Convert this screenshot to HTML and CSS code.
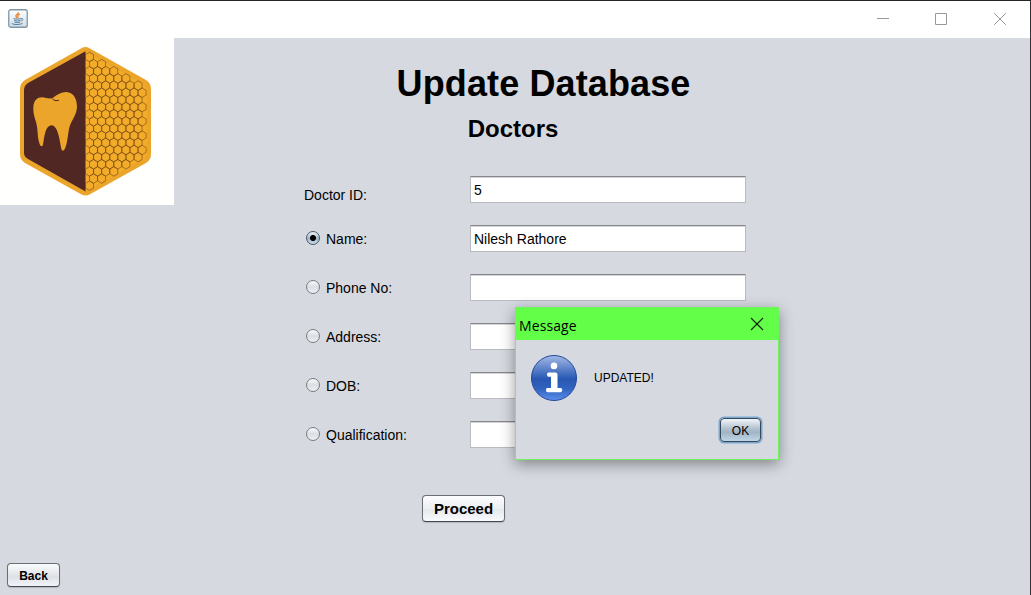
FILE: index.html
```html
<!DOCTYPE html>
<html lang="en">
<head>
<meta charset="utf-8">
<title>Update Database</title>
<link rel="stylesheet" href="styles.css">
</head>
<body>
<div class="window">
  <header class="titlebar">
    <svg class="java" width="20" height="19" viewBox="0 0 20 19">
      <defs><linearGradient id="jb" x1="0" y1="0" x2="0" y2="1"><stop offset="0" stop-color="#fff"/><stop offset="1" stop-color="#cfdce6"/></linearGradient></defs>
      <rect x=".75" y=".75" width="18.5" height="17.5" rx="2" fill="url(#jb)" stroke="#7f97a8" stroke-width="1.3"/>
      <path d="M10.3 3.200c.6 1.800-3.300 2.500-2.300 4.300l1.200 1.500M12 5.200c-3 1-2.400 2-1.700 3.600" fill="none" stroke="#ea8a3e" stroke-width="1.4"/>
      <path d="M5.500 9.700q3.500.9 7.500 0M6 11.500q3.500 1 6.500 0M6.500 13.200q3 .8 5.500 0M13 9.700c2.500-.8 2.500 1.800-.2 2.500M3.800 14.500c2 1.500 8.500 1.300 10.700-.1" fill="none" stroke="#56809f" stroke-width="1"/>
    </svg>
    <div class="controls">
      <svg width="12" height="12" viewBox="0 0 12 12"><path d="M0 5.500H12"/></svg>
      <svg width="12" height="12" viewBox="0 0 12 12"><path d="M.5.5h11v11H.5z"/></svg>
      <svg width="12" height="12" viewBox="0 0 12 12"><path d="M.2.2l11.600 11.600M11.800.2L.2 11.800"/></svg>
    </div>
  </header>
  <main class="content">
    <aside class="side">
      <svg class="logo" width="174" height="167" viewBox="0 38 174 167">
        <defs>
          <path id="c" d="M0-4.770L4-2.380V2.380L0 4.770-4 2.380V-2.380Z"/>
          <g id="r2"><use href="#c"/><use href="#c" x="8.100"/></g>
          <g id="r4"><use href="#r2"/><use href="#r2" x="16.200"/></g>
          <g id="r5"><use href="#r4"/><use href="#c" x="32.400"/></g>
          <g id="r7"><use href="#r5"/><use href="#r2" x="40.500"/></g>
        </defs>
        <path d="M81.500 48.200Q85.500 46 89.500 48.200L146 80Q151 83 151 89V154Q151 160 146 163L89.500 194.500Q85.500 196.700 81.500 194.500L25 163Q20 160 20 154V89Q20 83 25 80Z" fill="#eba52b"/>
        <path d="M85.500 51.500L142 83.500Q147 86 147 91V152Q147 157 142 160L85.500 191.500Z" fill="#f2ac29"/>
        <path d="M85.500 51.300L28 83Q24 85.500 24 90V153Q24 156.500 28 159L85.500 191.500Z" fill="#512724"/>
        <path d="M33.300 108C33.500 100 37.500 97.200 42 97.200C46 97.300 49 99.500 53 97.800C57 94.500 61.500 91.800 66.500 91.900C73 92.300 77 98 77 107C76.500 116 71 120 69 129C67.500 138 67 145 64.500 149.500C63.300 151.300 61.800 151 61.300 148.500C59.500 138 57.500 125.300 51.300 125.300C45 125.800 44.500 137 43 144.500C42.500 146.700 40.800 146.700 39.800 144.500C37 137 38.300 130 36 122C34.500 117 33.100 113 33.300 108Z" fill="#eba52b"/>
        <path d="M52 98.300C53.500 100.600 56 101 59 100.300" fill="none" stroke="#512724"/>
        <g fill="none" stroke="#74450f" stroke-width=".6">
          <use href="#c" x="89.500" y="57"/>
          <use href="#r2" x="93.500" y="64.150"/>
          <use href="#r4" x="89.500" y="71.300"/>
          <use href="#r5" x="93.500" y="78.450"/>
          <use href="#r7" x="89.500" y="85.600"/>
          <use href="#r7" x="93.500" y="92.750"/>
          <use href="#r7" x="89.500" y="99.900"/>
          <use href="#r7" x="93.500" y="107.050"/>
          <use href="#r7" x="89.500" y="114.200"/>
          <use href="#r7" x="93.500" y="121.350"/>
          <use href="#r7" x="89.500" y="128.500"/>
          <use href="#r7" x="93.500" y="135.650"/>
          <use href="#r7" x="89.500" y="142.800"/>
          <use href="#r7" x="93.500" y="149.950"/>
          <use href="#r7" x="89.500" y="157.100"/>
          <use href="#r5" x="93.500" y="164.250"/>
          <use href="#r4" x="89.500" y="171.400"/>
          <use href="#r2" x="93.500" y="178.550"/>
          <use href="#c" x="89.500" y="185.700"/>
        </g>
      </svg>
      <button class="btn back">Back</button>
    </aside>
    <section class="panel">
      <div class="headings">
        <h1>Update Database</h1>
        <h2>Doctors</h2>
      </div>
      <div class="form">
        <div class="row id"><span class="label">Doctor ID:</span><div class="field">5</div></div>
        <div class="row"><i class="radio on"></i><span class="label">Name:</span><div class="field">Nilesh Rathore</div></div>
        <div class="row"><i class="radio"></i><span class="label">Phone No:</span><div class="field"></div></div>
        <div class="row"><i class="radio"></i><span class="label">Address:</span><div class="field"></div></div>
        <div class="row"><i class="radio"></i><span class="label">DOB:</span><div class="field"></div></div>
        <div class="row"><i class="radio"></i><span class="label">Qualification:</span><div class="field"></div></div>
      </div>
      <button class="btn proceed">Proceed</button>
    </section>
  </main>
  <div class="dialog">
    <div class="dialog-title"><span>Message</span>
      <svg width="14" height="14" viewBox="0 0 14 14"><path d="M1 1l12 12M13 1L1 13" stroke="#102010" stroke-width="1.100"/></svg>
    </div>
    <div class="dialog-body">
      <div class="message">
        <svg width="46" height="46" viewBox="0 0 46 46">
          <defs><linearGradient id="ig" x1="0" y1="0" x2="0" y2="1"><stop offset="0" stop-color="#a3b9e5"/><stop offset=".48" stop-color="#315fb8"/><stop offset=".52" stop-color="#2857b1"/><stop offset=".75" stop-color="#3264c2"/><stop offset="1" stop-color="#5d91ed"/></linearGradient></defs>
          <circle cx="23" cy="23" r="22.500" fill="url(#ig)" stroke="#24489a"/>
          <circle cx="23" cy="10.900" r="3.300" fill="#fff"/>
          <path d="M17.500 17.500H24.500Q26.500 17.500 26.500 19.500V33H29.500Q31.300 33 31.300 35T29.500 37.200H16.500Q15 37.200 15 35T16.500 33H20V21.800H17.500Q16 21.800 16 19.700T17.500 17.500Z" fill="#fff"/>
        </svg>
        <span>UPDATED!</span>
      </div>
      <button class="btn ok">OK</button>
    </div>
  </div>
</div>
</body>
</html>
```
FILE: styles.css
```css
* { box-sizing: border-box; }
body {
  margin: 0;
  font-family: "Liberation Sans", Arial, sans-serif;
  color: #000;
}
.window {
  position: relative;
  width: 1031px;
  height: 595px;
  display: flex;
  flex-direction: column;
  overflow: hidden;
  background: #d6d9e0;
  border-top: 1px solid #252525;
  border-right: 1px solid #303236;
}
.titlebar {
  height: 37px;
  flex: none;
  display: flex;
  justify-content: space-between;
  padding: 8px 24px 0 8px;
  background: #fff;
}
.controls { display: flex; gap: 46px; padding-top: 4px; }
.controls svg { stroke: #999; fill: none; }
.controls svg:last-child { margin-left: 1px; }
.content { flex: 1; display: flex; }
.side {
  width: 174px;
  display: flex;
  flex-direction: column;
  justify-content: space-between;
  align-items: flex-start;
}
.logo { display: block; background: #fffffe; }
.btn {
  display: flex;
  align-items: center;
  justify-content: center;
  padding: 0;
  border: 1px solid #6b6e74;
  border-bottom-color: #45484d;
  border-radius: 4px;
  background: linear-gradient(#fdfdfe, #eceef2 50%, #e5e8ed 55%, #f8fafd);
  box-shadow: 0 1px 1px #b5b8bf;
  font: bold 12px "Liberation Sans", Arial, sans-serif;
  color: #000;
}
.back {
  width: 53px;
  height: 24px;
  margin: 0 0 8px 7px;
  padding-top: 2px;
  background: linear-gradient(#fafbfc, #e3e5ea 50%, #dcdfe4 55%, #f1f4f8);
}
.panel { width: 572px; padding: 23px 0 0 130px; }
.headings { width: 479px; text-align: center; }
h1 { margin: 0; font-size: 36px; line-height: 46px; letter-spacing: .12px; }
h2 { margin: 8px 0 0; padding-right: 61px; font-size: 24px; line-height: 28px; }
.form { display: flex; flex-direction: column; gap: 22px; margin-top: 33px; }
.row { display: flex; align-items: center; height: 27px; font-size: 14px; padding-left: 2px; }
.row.id { padding-left: 0; }
.label { flex: 1; line-height: 16px; }
.row.id .label { padding-top: 11px; }
.field {
  width: 276px;
  height: 27px;
  padding-left: 3px;
  line-height: 26px;
  background: #fff;
  border: 1px solid #b9bbc0;
  border-top-color: #85878b;
  box-shadow: inset 0 1px #d5d6d9;
}
.radio {
  width: 14px;
  height: 14px;
  margin: 0 6px 1px 0;
  border: 1px solid #777b83;
  border-radius: 50%;
  background: linear-gradient(#fafafb, #dcdee3 50%, #eef0f4);
}
.radio.on {
  border-color: #43586c;
  background: radial-gradient(circle, #000 2.600px, transparent 3.400px), linear-gradient(#edf3f8, #a4b6c6 55%, #c8dcea);
}
.proceed { width: 83px; height: 27px; margin: 47px 0 0 118px; font-size: 15px; }
.dialog {
  position: absolute;
  left: 515px;
  top: 306px;
  width: 264px;
  height: 153px;
  background: #d6d9e0;
  border: 1px solid #6cf45a;
  box-shadow: 0 4px 14px rgba(0, 0, 0, .4);
}
.dialog-title {
  height: 32px;
  display: flex;
  justify-content: space-between;
  align-items: center;
  padding: 0 14px 0 3px;
  background: #63ff48;
  font: 14px "Open Sans", "Noto Sans", sans-serif;
}
.dialog-title span { padding-top: 2px; letter-spacing: .1px; }
.dialog-body { padding: 15px 17px 0 15px; }
.message { display: flex; align-items: center; gap: 17px; font-size: 12px; }
.ok {
  width: 41px;
  height: 24px;
  margin: 17px 0 0 auto;
  padding-top: 1px;
  border-color: #34485b;
  background: linear-gradient(#f1f5f8, #b0c0ce 45%, #a0b4c5 60%, #c0d6e6);
  box-shadow: 0 0 0 1.500px #79a7cd;
  font-weight: normal;
}
```
